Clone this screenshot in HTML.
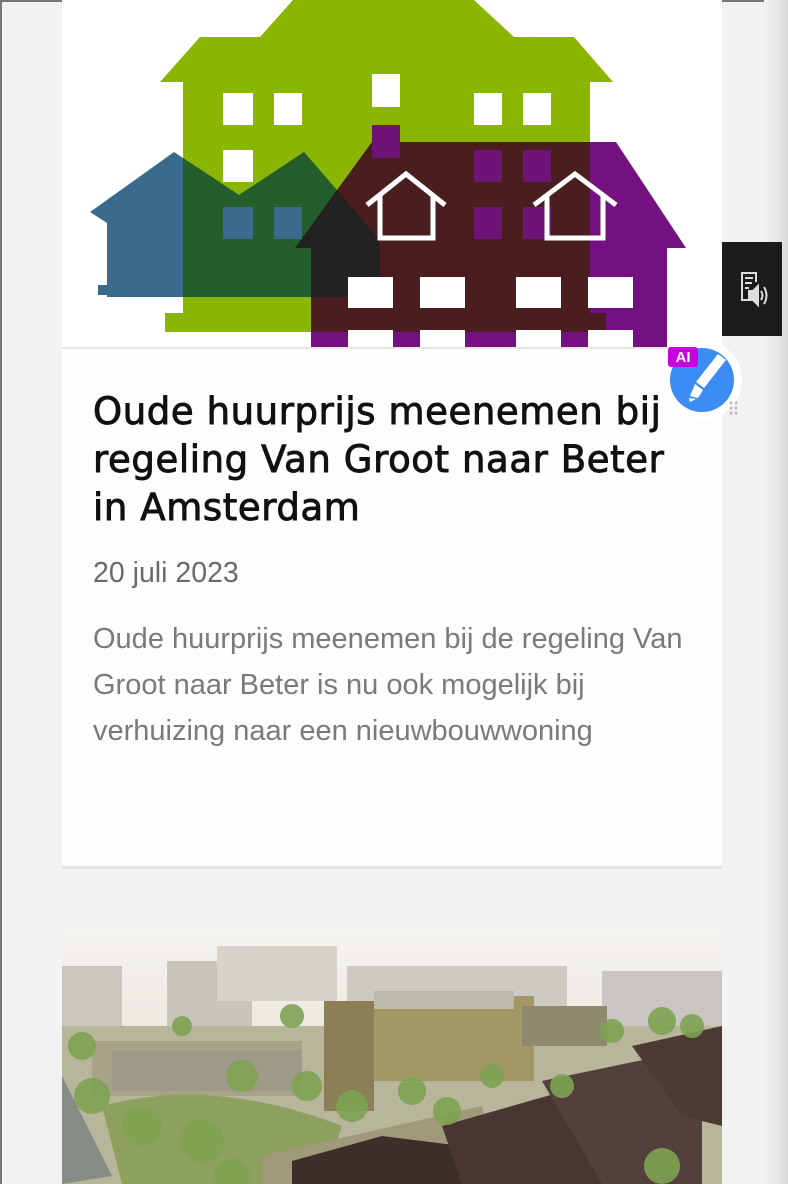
<!DOCTYPE html>
<html><head><meta charset="utf-8"><style>
html,body{margin:0;padding:0}
body{width:788px;height:1184px;background:#f2f2f2;position:relative;overflow:hidden;font-family:"Liberation Sans",sans-serif}
.edge{position:absolute;left:0;top:0;width:2px;height:1184px;background:#777}
.topl{position:absolute;left:0;top:0;width:788px;height:2px;background:#777}
.rs{position:absolute;left:764px;top:0;width:24px;height:1184px;background:linear-gradient(90deg,#f2f2f2,#e4e4e4 70%,#d8d8d8)}
.card{position:absolute;left:62px;top:0;width:660px;height:866px;background:#fdfdfd;border-bottom:3px solid #e2e2e2}
.img1{position:absolute;left:0;top:0;width:660px;height:347px;background:#fff;border-bottom:2px solid #e6e6e6}
h1{position:absolute;left:31px;top:388px;margin:0;width:600px;font-family:"DejaVu Sans","Liberation Sans",sans-serif;font-weight:normal;-webkit-text-stroke:0.9px #111;font-size:37px;line-height:48px;color:#111;letter-spacing:0.6px}
.date{position:absolute;left:31px;top:557px;font-size:28.5px;color:#6a6a6a}
.desc{position:absolute;left:31px;top:616px;width:610px;font-size:29px;line-height:46px;color:#7a7a7a}
.img2{position:absolute;left:62px;top:926px;width:660px;height:258px;overflow:hidden}
.tab{position:absolute;left:722px;top:242px;width:60px;height:94px;background:#1c1c1c}
</style></head><body>
<div class="topl"></div><div class="edge"></div><div class="rs"></div>
<div class="card">
 <div class="img1">
 <svg width="660" height="347" viewBox="62 0 660 347">
  <defs>
   <clipPath id="cg"><path d="M293 0H474L514 37H574L613 82H590V313H606V332H165V313H183V82H160L200 37H260Z"/></clipPath>
   <clipPath id="cb"><path d="M90 212L174 152L239 195L304 152L380 240V297H107V295H98V285H107V223Z"/></clipPath>
  </defs>
  <path fill="#8ab500" d="M293 0H474L514 37H574L613 82H590V313H606V332H165V313H183V82H160L200 37H260Z"/>
  <path fill="#3b6b8c" d="M90 212L174 152L239 195L304 152L380 240V297H107V295H98V285H107V223Z"/>
  <path fill="#74107f" d="M372 142H616L686 248H667V347H311V248H295Z"/>
  <g clip-path="url(#cg)">
   <path fill="#245e2a" d="M90 212L174 152L239 195L304 152L380 240V297H107V295H98V285H107V223Z"/>
   <path fill="#4a1e1e" d="M372 142H616L686 248H667V347H311V248H295Z"/>
   <g clip-path="url(#cb)"><path fill="#222" d="M372 142H616L686 248H667V347H311V248H295Z"/></g>
  </g>
  <g fill="#fff">
   <rect x="223" y="93" width="30" height="32"/><rect x="274" y="93" width="28" height="32"/>
   <rect x="372" y="74" width="28" height="33"/><rect x="474" y="93" width="28" height="32"/><rect x="523" y="93" width="28" height="32"/>
   <rect x="223" y="150" width="30" height="32"/>
   <rect x="348" y="277" width="45" height="31"/><rect x="420" y="277" width="45" height="31"/><rect x="516" y="277" width="45" height="31"/><rect x="588" y="277" width="45" height="31"/>
   <rect x="348" y="330" width="45" height="17"/><rect x="420" y="330" width="45" height="17"/><rect x="516" y="330" width="45" height="17"/><rect x="588" y="330" width="45" height="17"/>
  </g>
  <g fill="#6e1477"><rect x="372" y="125" width="28" height="33"/><rect x="474" y="150" width="28" height="32"/><rect x="523" y="150" width="28" height="32"/><rect x="474" y="207" width="28" height="32"/><rect x="523" y="207" width="28" height="32"/></g>
  <g fill="#3b6b8c"><rect x="223" y="207" width="30" height="32"/><rect x="274" y="207" width="28" height="32"/></g>
  <g fill="none" stroke="#fff" stroke-width="5">
   <path d="M367 205L406 174L445 205M380 196V238H433V196"/>
   <path d="M534 205L575 174L616 205M547 196V238H603V196"/>
  </g>
 </svg>
 </div>
 <h1>Oude huurprijs meenemen bij regeling Van Groot naar Beter in Amsterdam</h1>
 <div class="date">20 juli 2023</div>
 <div class="desc">Oude huurprijs meenemen bij de regeling Van Groot naar Beter is nu ook mogelijk bij verhuizing naar een nieuwbouwwoning</div>
</div>
<div class="img2">
<svg width="660" height="258" viewBox="0 0 660 258">
 <defs><linearGradient id="sky" x1="0" y1="0" x2="0" y2="1"><stop offset="0" stop-color="#f6f4f0"/><stop offset="1" stop-color="#dcd8cc"/></linearGradient></defs>
 <rect width="660" height="258" fill="url(#sky)"/>
 <rect x="0" y="40" width="60" height="70" fill="#c9c6c0"/>
 <rect x="105" y="35" width="85" height="80" fill="#c8c5bf"/>
 <rect x="155" y="20" width="120" height="55" fill="#d6d3cd"/>
 <rect x="285" y="40" width="220" height="40" fill="#cdcac4"/>
 <rect x="540" y="45" width="120" height="60" fill="#c9c6c2"/>
 <rect x="0" y="100" width="660" height="158" fill="#b7b59a"/>
 <rect x="30" y="115" width="210" height="55" fill="#a8a388"/>
 <rect x="50" y="125" width="190" height="40" fill="#9d9a88"/>
 <path d="M0 150L50 250L0 258Z" fill="#858c86"/>
 <path d="M40 180Q150 150 280 200L260 258H60Z" fill="#8ea05e"/>
 <rect x="262" y="75" width="50" height="110" fill="#8c7e55"/>
 <rect x="312" y="70" width="160" height="85" fill="#a39765"/>
 <rect x="312" y="65" width="140" height="18" fill="#bcb8aa"/>
 <rect x="460" y="80" width="85" height="40" fill="#8d8a6e"/>
 <path d="M200 230L420 180L440 258H200Z" fill="#a19a7a"/>
 <path d="M230 258V235L320 210L400 220V258Z" fill="#3e2e2a"/>
 <path d="M380 200L520 160L560 190V258H400Z" fill="#4a3530"/>
 <path d="M480 155L600 130L640 150V258H540Z" fill="#54403a"/>
 <path d="M570 120L660 100V200L620 190Z" fill="#4e3a34"/>
 <g fill="#7ea352" opacity=".9">
  <circle cx="20" cy="120" r="14"/><circle cx="30" cy="170" r="18"/><circle cx="80" cy="200" r="20"/><circle cx="140" cy="215" r="22"/>
  <circle cx="180" cy="150" r="16"/><circle cx="245" cy="160" r="15"/><circle cx="290" cy="180" r="16"/><circle cx="350" cy="165" r="14"/>
  <circle cx="385" cy="185" r="14"/><circle cx="430" cy="150" r="12"/><circle cx="500" cy="160" r="12"/><circle cx="600" cy="95" r="14"/>
  <circle cx="630" cy="100" r="12"/><circle cx="550" cy="105" r="12"/><circle cx="120" cy="100" r="10"/><circle cx="230" cy="90" r="12"/><circle cx="170" cy="250" r="18"/>
  <circle cx="600" cy="240" r="18"/>
 </g>
</svg>
</div>
<div class="tab">
 <svg width="60" height="94" viewBox="0 0 60 94">
  <g fill="none" stroke="#ddd" stroke-width="2">
   <path d="M27 58H20V31H34V40"/><path d="M23 36H31M23 41H30M23 46H27"/>
   <path d="M27 49H31L36 44V63L31 58H27Z" fill="#ddd"/>
   <path d="M39 49Q42 53.5 39 58M42 45Q47 53.5 42 62"/>
  </g>
 </svg>
</div>
<svg style="position:absolute;left:660px;top:338px" width="86" height="86" viewBox="0 0 86 86">
 <circle cx="42" cy="42" r="40" fill="#fff"/>
 <circle cx="42" cy="42" r="32" fill="#3b8cf5"/>
 <path d="M66 22L44 50L36 44L58 16" fill="#fff"/>
 <path d="M35 46L43 52L38 60L30 58Z" fill="#fff"/>
 <path d="M29 60L36 61L30 64Z" fill="#fff"/>
 <rect x="8" y="9" width="30" height="20" rx="3" fill="#c800e0"/>
 <text x="23" y="24" font-family="Liberation Sans" font-weight="bold" font-size="15" fill="#fff" text-anchor="middle">AI</text>
 <g fill="#bbb"><circle cx="71" cy="65" r="1.5"/><circle cx="76" cy="65" r="1.5"/><circle cx="71" cy="70" r="1.5"/><circle cx="76" cy="70" r="1.5"/><circle cx="71" cy="75" r="1.5"/><circle cx="76" cy="75" r="1.5"/></g>
</svg>
</body></html>
